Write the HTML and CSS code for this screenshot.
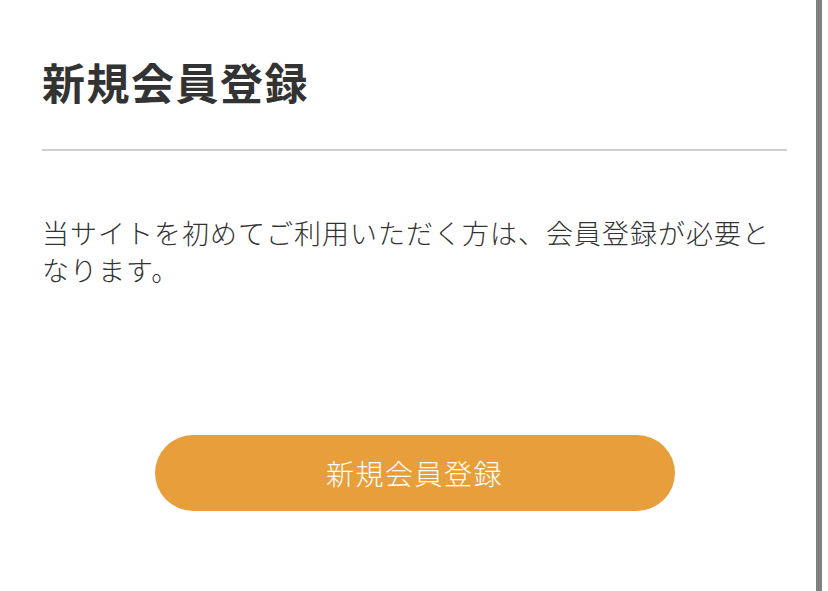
FILE: index.html
```html
<!DOCTYPE html>
<html lang="ja">
<head>
  <meta charset="UTF-8" />
  <meta name="viewport" content="width=device-width, initial-scale=1.0" />
  <title>新規会員登録</title>
  <link rel="stylesheet" href="styles.css">
</head>
<body>
  <div class="page">
    <main class="content">
      <h1 class="title">新規会員登録</h1>
      <p class="lead">当サイトを初めてご利用いただく方は、会員登録が必要となります。</p>
      <div class="actions">
        <button class="btn-register">新規会員登録</button>
      </div>
    </main>
    <div class="edge"></div>
  </div>
</body>
</html>
```

FILE: styles.css
```css
body {
  margin: 0;
  background-color: #fff;
  color: #333;
  font-family: "Noto Sans CJK JP", "Noto Sans", sans-serif;
}
.page {
  display: flex;
  height: 591px;
}
.content {
  width: 816px;
  box-sizing: border-box;
  padding: 52px 29px 0 42px;
}
.title {
  margin: 0;
  padding-bottom: 38px;
  border-bottom: 2px solid #cfcfcf;
  font-size: 43px;
  font-weight: 700;
  line-height: 59px;
  letter-spacing: 1.5px;
  color: #333;
}
.lead {
  margin: 63px 0 0;
  font-size: 27px;
  line-height: 37px;
  letter-spacing: 1px;
  font-weight: 300;
  color: #333;
}
.actions {
  display: flex;
  justify-content: center;
  margin-top: 147px;
}
.btn-register {
  width: 520px;
  height: 76px;
  border: none;
  border-radius: 38px;
  background-color: #e89f3b;
  color: #fff;
  font-family: inherit;
  font-size: 28px;
  font-weight: 300;
  letter-spacing: 1.5px;
  cursor: pointer;
}
.edge {
  width: 6px;
  background-color: #808080;
}
```
